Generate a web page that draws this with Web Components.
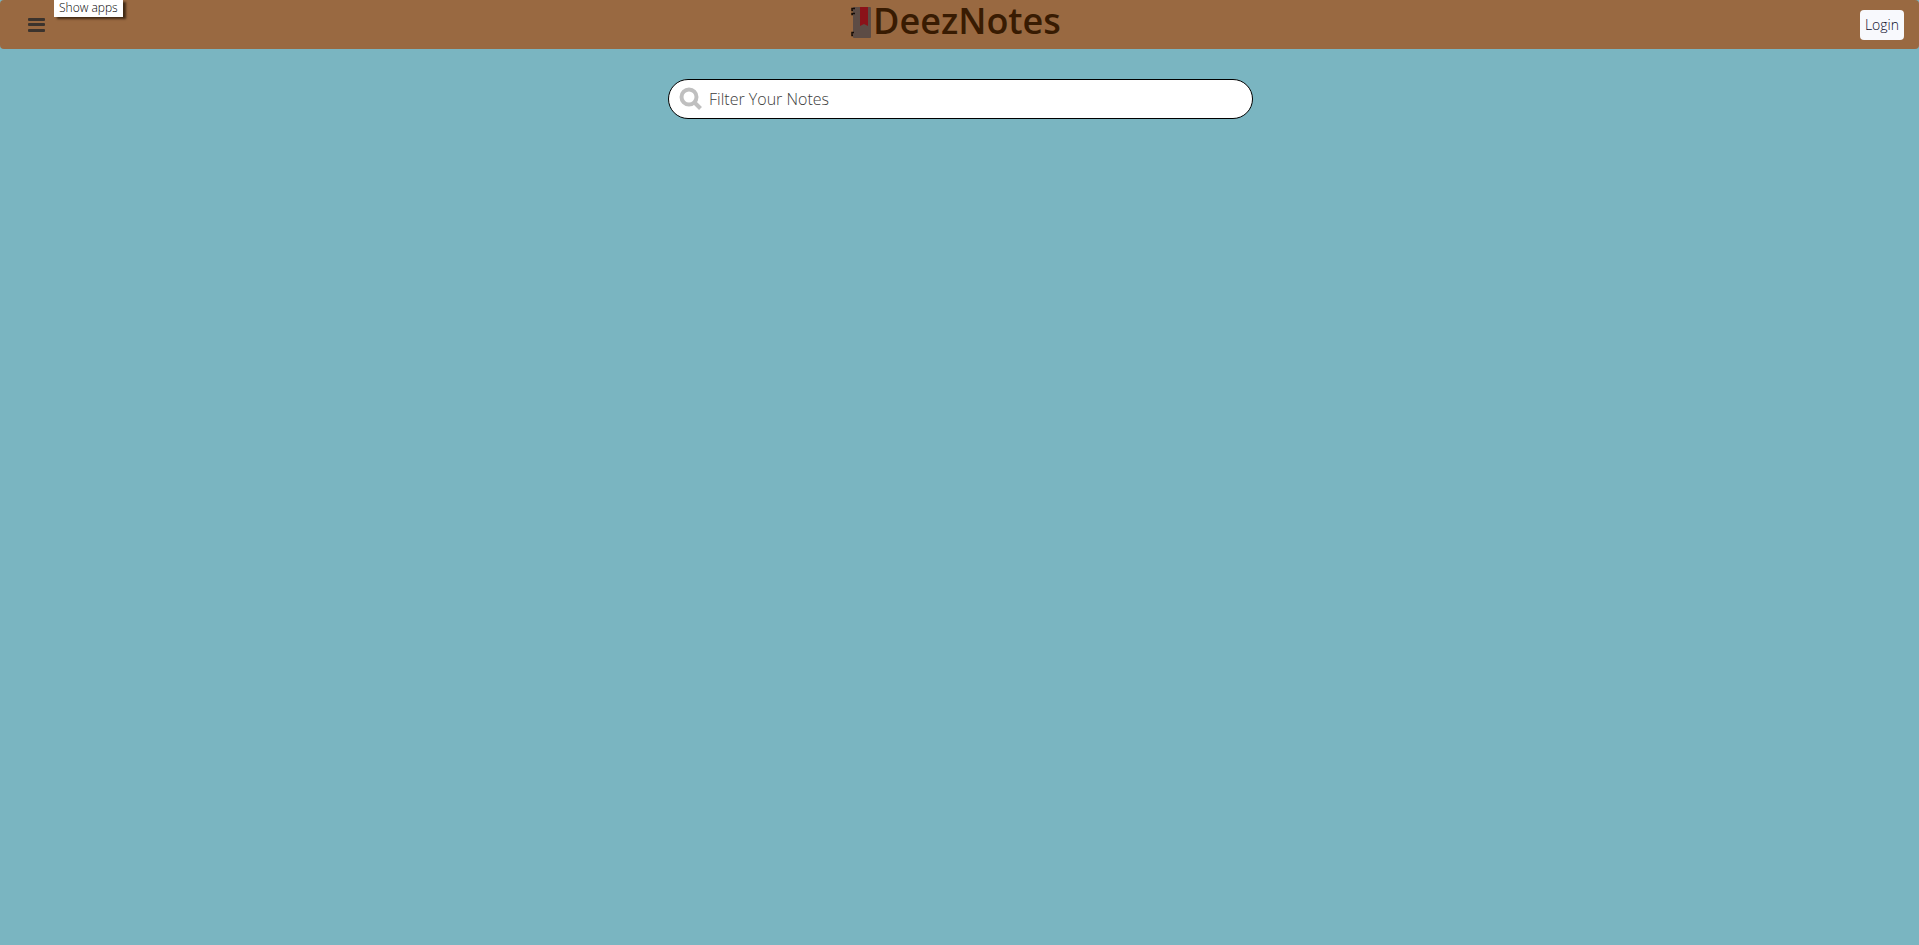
<!DOCTYPE html>
<html lang="en">
<head>
<meta charset="utf-8">
<title>DeezNotes</title>
<style>
  body { margin: 0; min-height: 100vh; background: #7ab5c1; font-family: "Noto Sans", "Open Sans", sans-serif; }
</style>
</head>
<body>
<notes-app></notes-app>
<script>
const define = (name, html) => customElements.define(name, class extends HTMLElement {
  constructor() {
    super();
    this.attachShadow({ mode: "open" }).innerHTML = html;
  }
});

define("menu-button", `
  <style>
    :host { display: block; }
    button { display: block; border: 0; background: none; padding: 8px; cursor: pointer; }
    svg { display: block; }
  </style>
  <button type="button" aria-label="Show apps">
    <svg width="17" height="14" viewBox="0 0 17 14" fill="#3b332d">
      <rect width="17" height="3" rx="1"/><rect y="5" width="17" height="3" rx="1"/><rect y="11" width="17" height="3" rx="1"/>
    </svg>
  </button>`);

define("tool-tip", `
  <style>
    :host { display: block; box-sizing: border-box; height: 17px; padding: 0 5px; background: #fff;
      color: #000; font: 300 12px/16px "Open Sans", sans-serif; white-space: nowrap; box-shadow: 3px 2px 2px rgba(30, 15, 0, .7); }
  </style>
  <slot></slot>`);

define("brand-logo", `
  <style>
    :host { display: flex; align-items: flex-start; gap: 2px; padding-right: 12px; color: #381b02; }
    svg { display: block; margin-top: 7px; }
    h1 { margin: 0; font: 600 36px/42px "Open Sans", sans-serif; }
  </style>
  <svg width="20" height="31" viewBox="0 0 20 31" aria-hidden="true">
    <rect x="2" width="18" height="31" rx="1" fill="#5d4c45"/>
    <path d="M9 0h8v19l-4-2-4 2z" fill="#8b1219"/>
    <path d="M4 1.5H1v2h1M4 6.500H1v1h1M3 25.500H1v3h1" fill="none" stroke="#160c07" stroke-width="1.5"/>
  </svg>
  <h1><slot></slot></h1>`);

define("login-button", `
  <style>
    :host { display: block; }
    button { display: block; height: 30px; padding: 0 5px; border: 0; border-radius: 4px; background: #f8f9fd;
      color: #0c0b2a; font: 300 14px/30px "Open Sans", sans-serif; cursor: pointer; }
  </style>
  <button type="button"><slot></slot></button>`);

define("app-header", `
  <style>
    :host { position: relative; display: grid; grid-template-columns: 1fr auto 1fr; box-sizing: border-box;
      height: 49px; padding: 0 15px 0 20px; background: #996941; border-radius: 4px; }
    menu-button { align-self: center; justify-self: start; }
    login-button { align-self: center; justify-self: end; }
    tool-tip { position: absolute; left: 54px; top: 0; }
  </style>
  <menu-button></menu-button>
  <brand-logo>DeezNotes</brand-logo>
  <login-button>Login</login-button>
  <tool-tip>Show apps</tool-tip>`);

define("search-field", `
  <style>
    :host { display: block; }
    label { display: flex; align-items: center; gap: 6px; box-sizing: border-box; height: 40px; padding: 0 20px 0 10px;
      background: #fff; border: 1px solid #000; border-radius: 20px; }
    svg { display: block; flex: none; }
    input { flex: 1; min-width: 0; padding: 0; border: 0; outline: 0; background: none; font: 300 16px/24px "Open Sans", sans-serif; color: #333; }
    input::placeholder { color: #3c3c3c; opacity: 1; }
  </style>
  <label>
    <svg width="24" height="24" viewBox="0 0 24 24" fill="none" stroke="#bfbfbf" aria-hidden="true">
      <circle cx="10" cy="10" r="7.5" stroke-width="4"/><path d="M15.500 15.500l6 6" stroke-width="4"/>
    </svg>
    <input type="search" placeholder="Filter Your Notes" aria-label="Filter Your Notes">
  </label>`);

define("notes-app", `
  <style>
    :host { display: block; }
    main { display: flex; justify-content: center; padding: 30px 20px 30px 22px; }
    search-field { width: 100%; max-width: 585px; }
  </style>
  <app-header></app-header>
  <main><search-field></search-field></main>`);
</script>
</body>
</html>
